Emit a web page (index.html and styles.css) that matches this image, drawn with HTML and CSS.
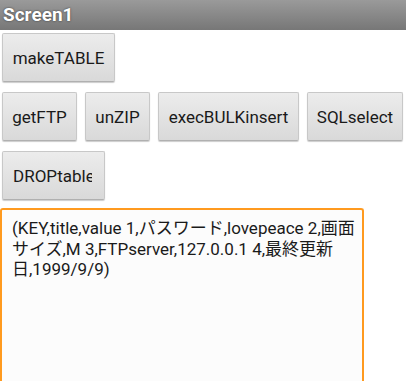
FILE: index.html
```html
<!DOCTYPE html>
<html lang="en">
<head>
    <meta charset="UTF-8">
    <meta name="viewport" content="width=device-width, initial-scale=1.0">
    <title>Screen1</title>
    <link rel="stylesheet" href="styles.css">
</head>
<body>
    <div class="titlebar">Screen1</div>
    <div class="screen">
        <div class="row">
            <button class="btn w-make">makeTABLE</button>
        </div>
        <div class="row">
            <button class="btn w-get">getFTP</button>
            <button class="btn w-unzip">unZIP</button>
            <button class="btn w-exec">execBULKinsert</button>
            <button class="btn w-sql">SQLselect</button>
        </div>
        <div class="row">
            <button class="btn w-drop clip"><span>DROPtable</span></button>
        </div>
        <div class="output">(KEY,title,value 1,パスワード,lovepeace 2,画面サイズ,M 3,FTPserver,127.0.0.1 4,最終更新日,1999/9/9)</div>
    </div>
</body>
</html>
```

FILE: styles.css
```css
body {
    margin: 0;
    height: 381px;
    background: #ffffff;
    font-family: Roboto, "Noto Sans CJK JP", sans-serif;
    overflow: hidden;
}
.titlebar {
    height: 30px;
    line-height: 29px;
    padding-left: 3px;
    background: linear-gradient(#9a9a9a, #777777);
    color: #ffffff;
    font-weight: bold;
    font-size: 19px;
    text-shadow: 0 0 2px #333;
}
.screen {
    padding: 3px 0 0 0;
}
.row {
    display: flex;
    gap: 8px;
    padding-left: 2px;
    margin-bottom: 10px;
}
.btn {
    height: 49px;
    padding: 0;
    border: 1px solid #c8c8c8;
    border-bottom-color: #b0b0b0;
    border-radius: 2px;
    background: linear-gradient(#ececec, #d9d9d9);
    box-shadow: 0 1px 1px rgba(0, 0, 0, 0.2);
    font-family: Roboto, sans-serif;
    font-size: 17px;
    color: #1a1a1a;
    text-align: center;
    white-space: nowrap;
}
.clip {
    text-align: left;
    padding-left: 10px;
}
.clip span {
    display: inline-block;
    width: 79px;
    overflow: hidden;
    vertical-align: middle;
}
.w-make { width: 113px; }
.w-get { width: 75px; }
.w-unzip { width: 65px; }
.w-exec { width: 141px; }
.w-sql { width: 96px; }
.w-drop { width: 103px; }
.output {
    width: 346px;
    height: 160px;
    margin-top: -2px;
    padding: 8px 4px 8px 10px;
    border: 2px solid #ff9a1f;
    border-bottom: none;
    border-radius: 3px 3px 0 0;
    background: #fcfcfc;
    font-size: 17px;
    line-height: 20.5px;
    color: #1a1a1a;
}
```
